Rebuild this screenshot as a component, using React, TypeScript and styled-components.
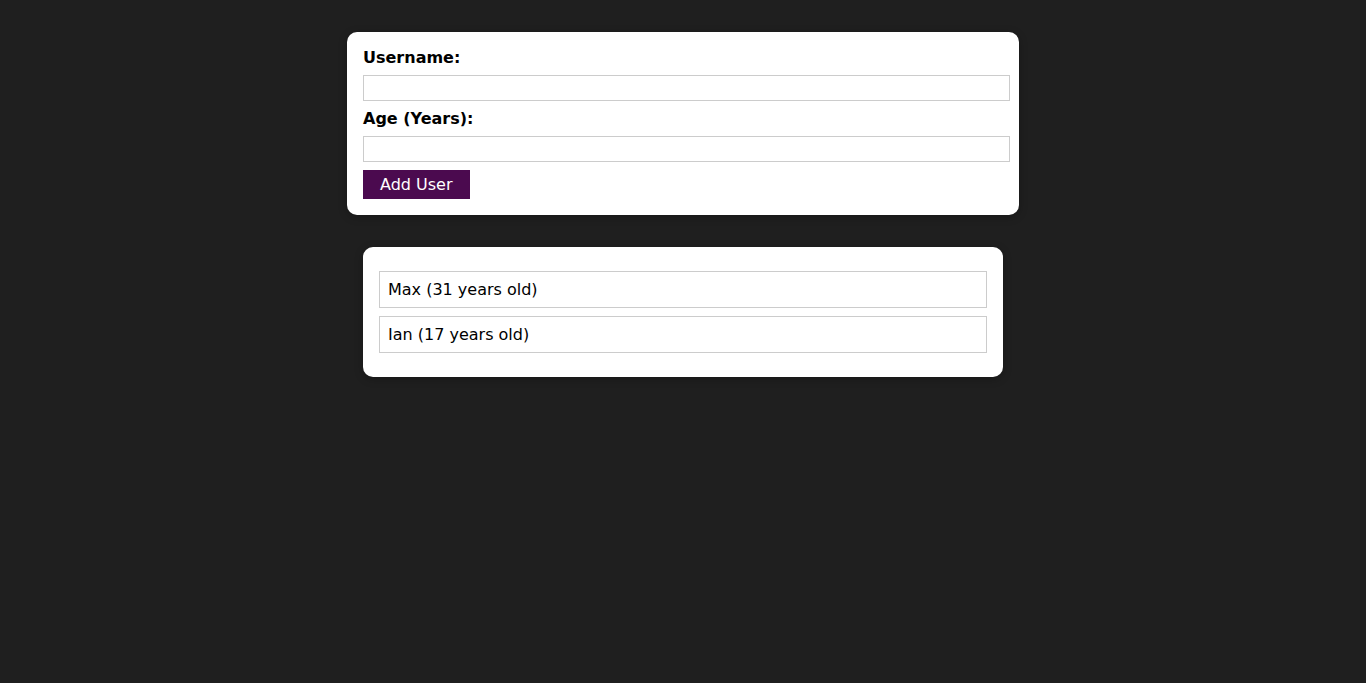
import React, { useState } from "react";
import styled, { createGlobalStyle } from "styled-components";

const GlobalStyle = createGlobalStyle`
  html {
    font-family: "DejaVu Sans", sans-serif;
  }
  body {
    margin: 0;
    background: #1f1f1f;
  }
`;

const Card = styled.div`
  background: white;
  box-shadow: 0 2px 8px rgba(0, 0, 0, 0.26);
  border-radius: 10px;
`;

const FormCard = styled(Card)`
  margin: 2rem auto;
  padding: 1rem;
  width: 90%;
  max-width: 40rem;
`;

const Label = styled.label`
  display: block;
  font-weight: bold;
  margin-bottom: 0.5rem;
`;

const Input = styled.input`
  font: inherit;
  display: block;
  width: 100%;
  border: 1px solid #ccc;
  padding: 0.15rem;
  margin: 0 0 0.5rem;
`;

const Button = styled.button`
  font: inherit;
  border: 1px solid #4b0a4f;
  background: #4b0a4f;
  color: white;
  padding: 0.25rem 1rem;
  cursor: pointer;
`;

const UsersCard = styled(Card)`
  margin: 2rem auto;
  width: 90%;
  max-width: 40rem;

  ul {
    list-style: none;
    padding: 1rem;
  }
`;

const UserItem = styled.li`
  border: 1px solid #ccc;
  margin: 0.5rem 0;
  padding: 0.5rem;
`;

interface IUser {
  id: string;
  name: string;
  age: number;
}

const App = () => {
  const [users] = useState<IUser[]>([
    { id: "u1", name: "Max", age: 31 },
    { id: "u2", name: "Ian", age: 17 },
  ]);
  const [username, setUsername] = useState("");
  const [age, setAge] = useState("");

  const handleSubmit = (e: React.SyntheticEvent) => {
    e.preventDefault();
  };

  return (
    <>
      <GlobalStyle />
      <FormCard>
        <form onSubmit={handleSubmit}>
          <Label htmlFor="username">Username:</Label>
          <Input
            id="username"
            type="text"
            value={username}
            onChange={(e) => setUsername(e.target.value)}
          />
          <Label htmlFor="age">Age (Years):</Label>
          <Input
            id="age"
            type="number"
            value={age}
            onChange={(e) => setAge(e.target.value)}
          />
          <Button type="submit">Add User</Button>
        </form>
      </FormCard>
      <UsersCard>
        <ul>
          {users.map((user) => (
            <UserItem key={user.id}>
              {user.name} ({user.age} years old)
            </UserItem>
          ))}
        </ul>
      </UsersCard>
    </>
  );
};

export default App;
